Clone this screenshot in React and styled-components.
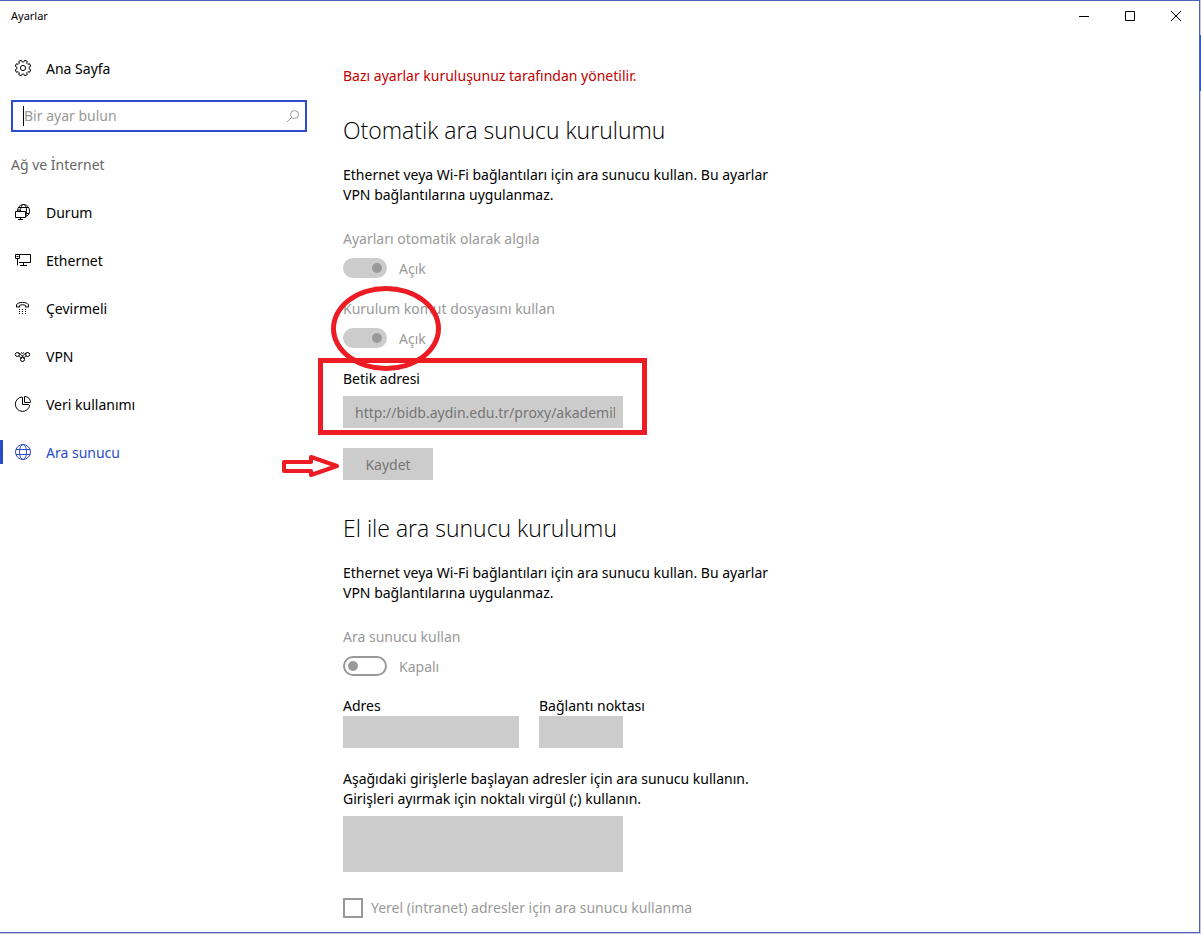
import React from "react";
import styled, { createGlobalStyle } from "styled-components";

const ACCENT = "#2a4bcb";
const MARK = "#ed1c24";

const GlobalStyle = createGlobalStyle`
  *, *::before, *::after { box-sizing: border-box; }
  body {
    margin: 0;
    background: #c9cad4;
    color: #000;
    font: 14px/20px "Noto Sans", "Open Sans", sans-serif;
  }
  button, input, textarea { font: inherit; margin: 0; }
  h1, h2, p { margin: 0; font-weight: 400; }
`;

const Desktop = styled.div`
  min-height: 100vh;
  display: flex;
  padding: 0 1px 1px 0;
  background: linear-gradient(#c9cad4 35px, #2d5cc0 35px, #2d5cc0 91px, #c9cad4 91px);
`;

const Window = styled.div`
  flex: 1;
  display: flex;
  flex-direction: column;
  background: #fff;
  border: 1px solid #4a63bd;
  border-left: 0;
`;

const TitleBar = styled.header`
  display: flex;
  align-items: center;
  justify-content: space-between;
  height: 30px;
  padding-left: 11px;
`;

const Title = styled.h1`
  font-size: 11px;
`;

const Controls = styled.div`
  display: flex;
`;

const ControlButton = styled.button`
  display: grid;
  place-items: center;
  width: 46px;
  height: 30px;
  padding: 0;
  border: 0;
  background: none;
`;

const Body = styled.div`
  flex: 1;
  display: grid;
  grid-template-columns: 318px 1fr;
`;

const Sidebar = styled.nav`
  padding-top: 13px;
`;

const NavItem = styled.a`
  position: relative;
  display: flex;
  align-items: center;
  gap: 14px;
  height: 48px;
  padding-left: 14px;
  color: ${(p) => (p.$active ? ACCENT : "#000")};
  text-decoration: none;

  &::before {
    content: "";
    position: absolute;
    left: 0;
    width: 3px;
    height: 24px;
    background: ${(p) => (p.$active ? ACCENT : "transparent")};
  }
`;

const Caption = styled.span`
  padding-top: 2px;
`;

const SearchBox = styled.label`
  display: flex;
  align-items: center;
  height: 32px;
  margin: 8px 11px 0;
  padding: 0 5px 0 10px;
  border: 2px solid ${ACCENT};
`;

const Caret = styled.span`
  width: 1px;
  height: 20px;
  background: #000;
`;

const SearchInput = styled.input`
  flex: 1;
  min-width: 0;
  padding: 0;
  border: 0;
  outline: 0;
  background: none;
  &::placeholder { color: #999; opacity: 1; }
`;

const GroupTitle = styled.p`
  padding: 23px 11px 13px;
  color: #666;
`;

const Content = styled.main`
  padding: 35px 24px 14px 25px;
`;

const Notice = styled.p`
  color: #c00000;
`;

const Section = styled.section`
  margin-top: 27px;
  & + & { margin-top: 31px; }
`;

const Heading = styled.h2`
  font-family: "Open Sans", "Noto Sans", sans-serif;
  font-size: 23px;
  line-height: 34px;
  font-weight: 300;
`;

const Description = styled.p`
  max-width: 440px;
  margin-top: 18px;
`;

const Setting = styled.div`
  position: relative;
  width: fit-content;
  margin-top: ${(p) => (p.$first ? 24 : 21)}px;
  color: #999;
`;

const SettingLabel = styled.label`
  display: block;
`;

const ToggleRow = styled.div`
  display: flex;
  align-items: center;
  gap: 12px;
  height: 20px;
  margin-top: 9px;
`;

const Toggle = styled.input`
  appearance: none;
  display: flex;
  align-items: center;
  justify-content: flex-start;
  width: 44px;
  height: 20px;
  padding: 0 3px;
  border: 2px solid #999;
  border-radius: 10px;

  &::after {
    content: "";
    width: 10px;
    height: 10px;
    border-radius: 5px;
    background: #999;
  }
  &:checked {
    justify-content: flex-end;
    border-color: #ccc;
    background: #ccc;
  }
`;

const Field = styled.div`
  position: relative;
  display: flex;
  flex-direction: column;
  gap: ${(p) => p.$gap || 0}px;
  width: ${(p) => p.$width}px;
  margin-top: ${(p) => p.$top || 0}px;
`;

const FieldLabel = styled.label`
  white-space: nowrap;
`;

const TextBox = styled.input`
  width: 100%;
  height: 32px;
  padding: 0 8px 0 12px;
  border: 0;
  background: #ccc;
  color: #767676;
`;

const TextArea = styled.textarea`
  display: block;
  width: 280px;
  height: 56px;
  padding: 6px 12px;
  border: 0;
  resize: none;
  background: #ccc;
`;

const FieldRow = styled.div`
  display: flex;
  gap: 20px;
  margin-top: 20px;
`;

const ButtonRow = styled.div`
  position: relative;
  margin-top: 20px;
`;

const SaveButton = styled.button`
  width: 90px;
  height: 32px;
  padding: 2px 0 0;
  border: 0;
  background: #ccc;
  color: #767676;
`;

const CheckRow = styled.div`
  display: flex;
  align-items: center;
  gap: 8px;
  margin-top: 26px;
  color: #999;
`;

const CheckBox = styled.input`
  appearance: none;
  width: 20px;
  height: 20px;
  border: 2px solid #999;
  background: #fff;
`;

const CircleMark = styled.div`
  position: absolute;
  left: -12px;
  top: -13px;
  width: 110px;
  height: 85px;
  border: 5px solid ${MARK};
  border-radius: 50%;
  pointer-events: none;
`;

const FrameMark = styled.div`
  position: absolute;
  left: -25px;
  top: -11px;
  width: 329px;
  height: 77px;
  border: 5px solid ${MARK};
  pointer-events: none;
`;

const ArrowMark = styled.svg`
  position: absolute;
  left: -61px;
  top: 7px;
`;

const Svg = ({ size = 18, children, ...rest }) => (
  <svg width={size} height={size} viewBox={`0 0 ${size} ${size}`} fill="none" stroke="currentColor" aria-hidden="true" {...rest}>
    {children}
  </svg>
);

const gearPath = () => {
  const points = [];
  for (let i = 0; i < 8; i += 1) {
    [[-15, 6.1], [-10, 7.9], [10, 7.9], [15, 6.1]].forEach(([offset, radius]) => {
      const angle = ((i * 45 + 22.5 + offset) * Math.PI) / 180;
      points.push(`${(9 + radius * Math.cos(angle)).toFixed(2)} ${(9 + radius * Math.sin(angle)).toFixed(2)}`);
    });
  }
  return `M${points.join("L")}Z`;
};

const GearIcon = () => (
  <Svg>
    <path d={gearPath()} strokeLinejoin="round" />
    <circle cx="9" cy="9" r="2.6" />
  </Svg>
);

const StatusIcon = () => (
  <Svg>
    <path d="M3.500 8A6 6.300 0 1 1 12 13.500" />
    <path d="M6.500 8C6.500 4 8 1.500 9.500 1.500C11.500 1.500 12.700 4.500 12.500 8.500C12.500 10.500 12.200 12.500 11.500 13.500M4.500 4.500H14.500M3.500 7H6M12 10.500H15" />
    <path d="M1.500 8.500H11.500V14.500H1.500ZM6.500 14.500V16.500M4 16.500H9" />
  </Svg>
);

const EthernetIcon = () => (
  <Svg>
    <path d="M5.500 3.500H16.500V11.500H5M9.500 11.500V14.500M6 14.500H13" />
    <path d="M1.500 3.500H5.500V7.500H1.500ZM3.500 7.500V14.500M2.500 5.500H4.500" />
  </Svg>
);

const DialUpIcon = () => (
  <Svg>
    <path d="M2.500 8V5.800C4 2.600 13 2.600 14.500 5.800V8H11.500V6.500C10 5.500 7 5.500 5.500 6.500V8Z" />
    <path d="M5 10.500h1m2 0h1m2 0h1M5 12.500h1m2 0h1m2 0h1M5 14.500h1m2 0h1m2 0h1" />
  </Svg>
);

const VpnIcon = () => (
  <Svg>
    <circle cx="3.300" cy="7.500" r="2" />
    <circle cx="13.700" cy="7.500" r="2" />
    <circle cx="8.500" cy="12.500" r="2" />
    <path d="M4.500 5.900C6.500 6.500 8 8.500 10.200 11.500M4.500 9.100C5.500 8.500 6 9.500 6.800 11.500M12.500 5.900C10.500 6.500 9 8.500 6.800 11.500M12.500 9.100C11.500 8.500 11 9.500 10.200 11.500M7 5.500L8.500 6.500L10 5.500" />
  </Svg>
);

const DataIcon = () => (
  <Svg>
    <path d="M8 2A7.200 7.200 0 1 0 15.700 10M8.500 2V9.500H15" />
    <path d="M10.500 1.500V7.500H16.500C16.500 4 14 1.500 10.500 1.500Z" />
  </Svg>
);

const GlobeIcon = () => (
  <Svg>
    <circle cx="9" cy="9" r="7.500" />
    <ellipse cx="9" cy="9" rx="3.500" ry="7.500" />
    <path d="M2 6.500H16M2 11.500H16" />
  </Svg>
);

const SearchIcon = () => (
  <Svg size={14} color="#999">
    <circle cx="8.500" cy="5.500" r="4" />
    <path d="M5.500 8.500L1 13" />
  </Svg>
);

const navItems = [
  { label: "Durum", Icon: StatusIcon },
  { label: "Ethernet", Icon: EthernetIcon },
  { label: "Çevirmeli", Icon: DialUpIcon },
  { label: "VPN", Icon: VpnIcon },
  { label: "Veri kullanımı", Icon: DataIcon },
  { label: "Ara sunucu", Icon: GlobeIcon, active: true },
];

const ToggleSetting = ({ id, label, on, first, children }) => (
  <Setting $first={first}>
    <SettingLabel htmlFor={id}>{label}</SettingLabel>
    <ToggleRow>
      <Toggle id={id} type="checkbox" role="switch" defaultChecked={on} disabled />
      <Caption>{on ? "Açık" : "Kapalı"}</Caption>
    </ToggleRow>
    {children}
  </Setting>
);

const proxyText = "Ethernet veya Wi-Fi bağlantıları için ara sunucu kullan. Bu ayarlar VPN bağlantılarına uygulanmaz.";

export default function App() {
  return (
    <>
      <GlobalStyle />
      <Desktop>
        <Window>
          <TitleBar>
            <Title>Ayarlar</Title>
            <Controls>
              <ControlButton aria-label="Simge durumuna küçült">
                <Svg size={12}><path d="M1 6.500H11" /></Svg>
              </ControlButton>
              <ControlButton aria-label="Ekranı kapla">
                <Svg size={12}><path d="M1.500 1.500H10.500V10.500H1.500Z" /></Svg>
              </ControlButton>
              <ControlButton aria-label="Kapat">
                <Svg size={12}><path d="M1 1L11 11M11 1L1 11" /></Svg>
              </ControlButton>
            </Controls>
          </TitleBar>
          <Body>
            <Sidebar>
              <NavItem href="#home"><GearIcon /><Caption>Ana Sayfa</Caption></NavItem>
              <SearchBox>
                <Caret />
                <SearchInput type="text" placeholder="Bir ayar bulun" aria-label="Bir ayar bulun" />
                <SearchIcon />
              </SearchBox>
              <GroupTitle>Ağ ve İnternet</GroupTitle>
              {navItems.map(({ label, Icon, active }) => (
                <NavItem key={label} href="#" $active={active} aria-current={active ? "page" : undefined}>
                  <Icon />
                  <Caption>{label}</Caption>
                </NavItem>
              ))}
            </Sidebar>
            <Content>
              <Notice>Bazı ayarlar kuruluşunuz tarafından yönetilir.</Notice>
              <Section>
                <Heading>Otomatik ara sunucu kurulumu</Heading>
                <Description>{proxyText}</Description>
                <ToggleSetting id="detect" label="Ayarları otomatik olarak algıla" on first />
                <ToggleSetting id="script" label="Kurulum komut dosyasını kullan" on>
                  <CircleMark />
                </ToggleSetting>
                <Field $width={280} $gap={7} $top={21}>
                  <FieldLabel htmlFor="script-url">Betik adresi</FieldLabel>
                  <TextBox id="script-url" type="text" defaultValue="http://bidb.aydin.edu.tr/proxy/akademik" disabled />
                  <FrameMark />
                </Field>
                <ButtonRow>
                  <SaveButton type="button" disabled>Kaydet</SaveButton>
                  <ArrowMark width="60" height="24" viewBox="0 0 60 24" fill="none" stroke={MARK} strokeWidth="4" strokeLinejoin="round" aria-hidden="true">
                    <path d="M2 7H29V2L55 11L29 20V16H2Z" />
                  </ArrowMark>
                </ButtonRow>
              </Section>
              <Section>
                <Heading>El ile ara sunucu kurulumu</Heading>
                <Description>{proxyText}</Description>
                <ToggleSetting id="manual" label="Ara sunucu kullan" first />
                <FieldRow>
                  <Field $width={176}>
                    <FieldLabel htmlFor="address">Adres</FieldLabel>
                    <TextBox id="address" type="text" disabled />
                  </Field>
                  <Field $width={84}>
                    <FieldLabel htmlFor="port">Bağlantı noktası</FieldLabel>
                    <TextBox id="port" type="text" disabled />
                  </Field>
                </FieldRow>
                <Field $width={440} $gap={7} $top={21}>
                  <label htmlFor="exceptions">
                    Aşağıdaki girişlerle başlayan adresler için ara sunucu kullanın.<br />
                    Girişleri ayırmak için noktalı virgül (;) kullanın.
                  </label>
                  <TextArea id="exceptions" disabled />
                </Field>
                <CheckRow>
                  <CheckBox id="local" type="checkbox" disabled />
                  <label htmlFor="local">Yerel (intranet) adresler için ara sunucu kullanma</label>
                </CheckRow>
              </Section>
            </Content>
          </Body>
        </Window>
      </Desktop>
    </>
  );
}
